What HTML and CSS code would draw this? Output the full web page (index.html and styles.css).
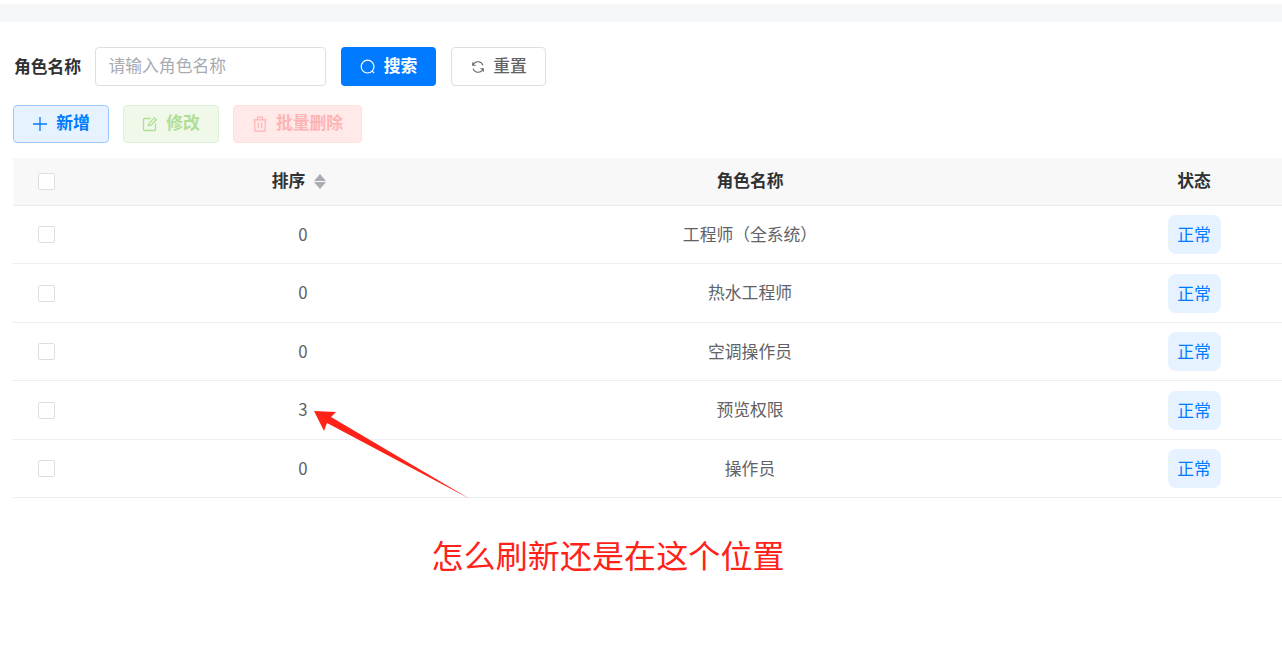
FILE: index.html
```html
<!DOCTYPE html>
<html lang="zh-CN">
<head>
<meta charset="utf-8">
<title>角色管理</title>
<link rel="stylesheet" href="styles.css">
</head>
<body>
<div class="top-strip"></div>
<main class="page">
  <form class="search-row">
    <label class="field-label">角色名称</label>
    <input class="text-input" type="text" placeholder="请输入角色名称">
    <button type="button" class="btn btn-search">
      <svg class="icon" viewBox="0 0 16 16" fill="none" stroke="currentColor" stroke-width="1.2"><circle cx="7.6" cy="7.6" r="6.4"/><path d="M12.2 12.2l2 2"/></svg>
      <span>搜索</span>
    </button>
    <button type="button" class="btn btn-reset">
      <svg class="icon icon-small" viewBox="0 0 16 16" fill="none" stroke="currentColor" stroke-width="1.2"><path d="M13.6 6.2A6 6 0 0 0 3 4.4L1.9 6"/><path d="M2.4 9.8A6 6 0 0 0 13 11.6L14.1 10"/><path d="M2 2.6V6h3.2M14 13.4V10h-3.2"/></svg>
      <span>重置</span>
    </button>
  </form>
  <div class="action-row">
    <button type="button" class="btn btn-light btn-add">
      <svg class="icon" viewBox="0 0 16 16" fill="none" stroke="currentColor" stroke-width="1.3"><path d="M8 1v14M1 8h14"/></svg>
      <span>新增</span>
    </button>
    <button type="button" class="btn btn-light btn-edit">
      <svg class="icon" viewBox="0 0 16 16" fill="none" stroke="currentColor" stroke-width="1.3"><path d="M8.5 2.5H2.5a1 1 0 0 0-1 1v10a1 1 0 0 0 1 1h10a1 1 0 0 0 1-1v-6"/><path d="M6.5 9.6l.5-2.4 5.4-5.4 2 2L9 9.2z"/></svg>
      <span>修改</span>
    </button>
    <button type="button" class="btn btn-light btn-delete">
      <svg class="icon" viewBox="0 0 16 16" fill="none" stroke="currentColor" stroke-width="1.2"><path d="M1.5 3.8h13M5.5 3.8V1.2h5v2.6M2.8 3.8v11.4h10.4V3.8M6.3 6.5v6M9.7 6.5v6"/></svg>
      <span>批量删除</span>
    </button>
  </div>
  <table class="role-table">
    <colgroup>
      <col class="col-check"><col class="col-sort"><col class="col-name"><col class="col-status">
    </colgroup>
    <thead>
      <tr>
        <th class="cell-check"><span class="checkbox"></span></th>
        <th><span class="sort-head">排序<svg class="sort-icon" viewBox="0 0 12 15"><path d="M6 0l6 7H0z"/><path d="M6 15l6-7H0z"/></svg></span></th>
        <th>角色名称</th>
        <th>状态</th>
      </tr>
    </thead>
    <tbody>
      <tr><td class="cell-check"><span class="checkbox"></span></td><td>0</td><td>工程师（全系统）</td><td><span class="tag">正常</span></td></tr>
      <tr><td class="cell-check"><span class="checkbox"></span></td><td>0</td><td>热水工程师</td><td><span class="tag">正常</span></td></tr>
      <tr><td class="cell-check"><span class="checkbox"></span></td><td>0</td><td>空调操作员</td><td><span class="tag">正常</span></td></tr>
      <tr><td class="cell-check"><span class="checkbox"></span></td><td>3</td><td>预览权限</td><td><span class="tag">正常</span></td></tr>
      <tr><td class="cell-check"><span class="checkbox"></span></td><td>0</td><td>操作员</td><td><span class="tag">正常</span></td></tr>
    </tbody>
  </table>
</main>
<svg class="annotation-arrow" viewBox="0 0 1282 645"><polygon points="314,411 336,412 331,417 470,499 327,423 324,431"/></svg>
<div class="annotation-text">怎么刷新还是在这个位置</div>
</body>
</html>
```
FILE: styles.css
```css
* { box-sizing: border-box; }
html, body { margin: 0; height: 100%; overflow: hidden; background: #fff; }
body { font-family: "Noto Sans CJK SC", "Noto Sans", sans-serif; font-size: 16.8px; color: #606266; position: relative; }
.top-strip { height: 18px; margin-top: 4px; background: #f6f7f9; }
.page { padding: 25px 0 0 13px; width: 1420px; }
.search-row { display: flex; align-items: center; height: 39px; }
.field-label { width: 82px; padding: 0 0 0 1px; font-size: 16.8px; font-weight: 700; color: #303133; line-height: 37px; }
.text-input { width: 231px; height: 39px; padding: 0 0 3px 12.5px; border: 1px solid #dcdfe6; border-radius: 4px; font: inherit; color: #606266; outline: none; }
.text-input::placeholder { color: #a8abb2; opacity: 1; }
.btn { display: inline-flex; align-items: center; justify-content: center; gap: 8px; height: 39px; border: 1px solid transparent; border-radius: 4px; padding: 0; font-family: inherit; font-size: 16.8px; font-weight: 500; }
.btn span { position: relative; top: -2px; }
.icon { width: 16px; height: 16px; flex: none; }
.icon-small { width: 14px; height: 14px; }
.btn-search { width: 95px; margin-left: 15px; background: #007bff; color: #fff; font-weight: 700; }
.btn-reset { width: 95px; margin-left: 15px; padding-left: 1px; background: #fff; border-color: #dcdfe6; color: #606266; }
.action-row { display: flex; gap: 14px; margin-top: 19px; }
.btn-light { height: 38px; font-weight: 700; }
.btn-add { width: 96px; background: #e6f2ff; border-color: #99caff; color: #007bff; }
.btn-edit { width: 96px; background: #eff8e9; border-color: #dff2d3; color: #b1de94; }
.btn-delete { width: 129px; background: #ffe9e9; border-color: #ffe0e0; color: #fdb4b4; }
.role-table { width: 1401px; margin-top: 15px; border-collapse: collapse; table-layout: fixed; }
.col-check { width: 67px; }
.col-sort { width: 446px; }
.col-name { width: 448px; }
.col-status { width: 440px; }
.role-table th { height: 47px; padding: 0 0 2px; background: #f8f8f9; color: #303133; font-size: 16.8px; font-weight: 700; text-align: center; border-bottom: 1px solid #e9e9eb; }
.role-table td { height: 58.5px; padding: 0 0 1px; text-align: center; color: #606266; border-bottom: 1px solid #ebeef5; }
.role-table th.cell-check { text-align: left; padding: 0 0 0 25px; }
.role-table td.cell-check { text-align: left; padding: 1px 0 0 25px; }
.checkbox { display: block; width: 17px; height: 17px; background: #fff; border: 1px solid #dcdfe6; border-radius: 2px; }
.sort-head { display: inline-flex; align-items: center; gap: 9px; margin-left: -8px; }
.sort-icon { width: 12px; height: 15px; fill: #a8abb2; position: relative; top: 1px; }
.role-table td:last-child { padding: 1px 0 0; }
.tag { display: inline-block; width: 53px; height: 39px; line-height: 39px; border-radius: 8px; background: #e6f2ff; color: #007bff; vertical-align: middle; }
.annotation-arrow { position: absolute; left: 0; top: 0; width: 1282px; height: 645px; pointer-events: none; }
.annotation-arrow polygon { fill: #ff2218; }
.annotation-text { position: absolute; left: 431.5px; top: 531px; font-size: 32px; letter-spacing: 0.1px; line-height: 46px; color: #ff2218; white-space: nowrap; }
```
